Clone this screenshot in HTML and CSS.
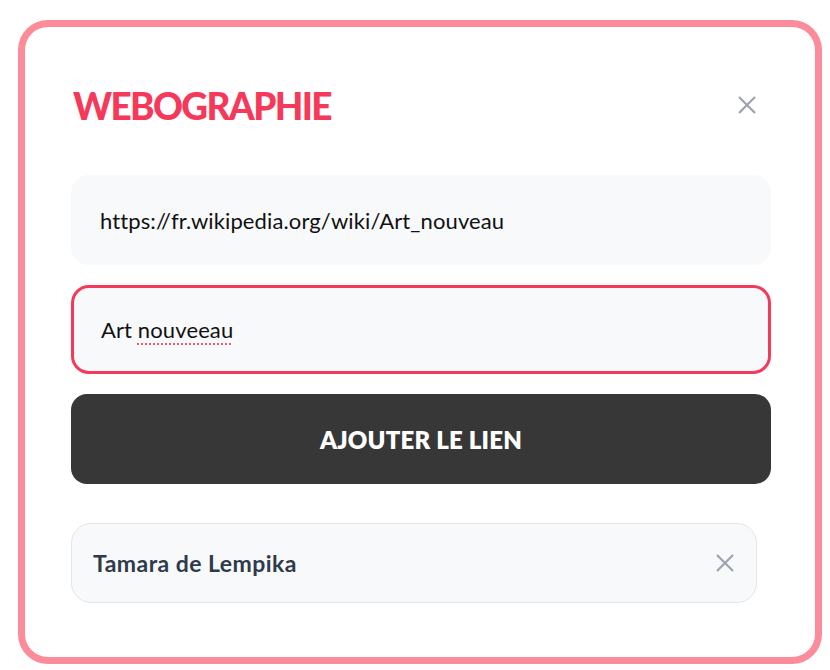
FILE: index.html
```html
<!DOCTYPE html>
<html lang="fr">
<head>
<meta charset="utf-8">
<title>Webographie</title>
<link rel="stylesheet" href="styles.css">
</head>
<body>
<div class="modal">
  <div class="header">
    <h1 class="title">WEBOGRAPHIE</h1>
    <button class="close" aria-label="Fermer">
      <svg width="20" height="20" viewBox="0 0 20 20"><path d="M2 2 L18 18 M18 2 L2 18" stroke="#9ca3af" stroke-width="2.2" stroke-linecap="butt"/></svg>
    </button>
  </div>
  <div class="field"><span>https://fr.wikipedia.org/wiki/Art_nouveau</span></div>
  <div class="field field-active"><span>Art <span class="misspelled">nouveeau</span></span></div>
  <button class="add">AJOUTER LE LIEN</button>
  <ul class="links">
    <li class="link">
      <span class="link-name">Tamara de Lempika</span>
      <svg class="link-remove" width="20" height="20" viewBox="0 0 20 20"><path d="M2 2 L18 18 M18 2 L2 18" stroke="#9ca3af" stroke-width="2.2"/></svg>
    </li>
  </ul>
</div>
</body>
</html>
```

FILE: styles.css
```css
* { box-sizing: border-box; }
html, body { margin: 0; padding: 0; background: #ffffff; }
body { font-family: "Lato", "Noto Sans", sans-serif; }

.modal {
  margin: 20px 0 0 18px;
  width: 804px;
  height: 644px;
  border: 7px solid #fd8c9b;
  border-radius: 30px;
  background: #fff;
  padding: 45px 44px 0 46px;
  display: flex;
  flex-direction: column;
}

.header {
  height: 66px;
  display: flex;
  align-items: center;
  justify-content: space-between;
  margin-bottom: 37px;
}
.title {
  margin: 0 0 0 2px;
  font-family: "Lato", sans-serif;
  font-weight: 900;
  font-size: 37px;
  letter-spacing: -1.65px;
  color: #f6395a;
  line-height: 1;
}
.close {
  border: 0;
  background: none;
  padding: 0;
  margin-right: 14px;
  width: 20px;
  height: 20px;
  display: flex;
}

.field {
  height: 90px;
  border-radius: 18px;
  background: #f8f9fb;
  display: flex;
  align-items: center;
  padding: 0 27px 0;
  font-size: 22px;
  letter-spacing: 0.12px;
  color: #111;
  margin-bottom: 20px;
  border: 2px solid transparent;
}
.field-active {
  height: 89px;
  border: 3px solid #f43a5a;
  padding: 0 27px 0;
  font-size: 22px;
}
.misspelled {
  text-decoration: underline dotted #f25a6e;
  text-decoration-thickness: 2px;
  text-underline-offset: 5px;
}

.add {
  height: 90px;
  border: 0;
  border-radius: 16px;
  background: #373737;
  color: #fff;
  font-family: "Lato", sans-serif;
  font-weight: 800;
  font-size: 24px;
  letter-spacing: 0.2px;
  margin-bottom: 39px;
}

.links {
  list-style: none;
  margin: 0;
  padding: 0;
}
.link {
  height: 80px;
  margin-right: 14px;
  border: 1px solid #e3e5ea;
  border-radius: 20px;
  background: #f8f9fb;
  display: flex;
  align-items: center;
  justify-content: space-between;
  padding: 0 21px 0 21px;
}
.link-name {
  font-weight: 700;
  font-size: 23px;
  letter-spacing: 0.45px;
  color: #2f3a4b;
}
```
